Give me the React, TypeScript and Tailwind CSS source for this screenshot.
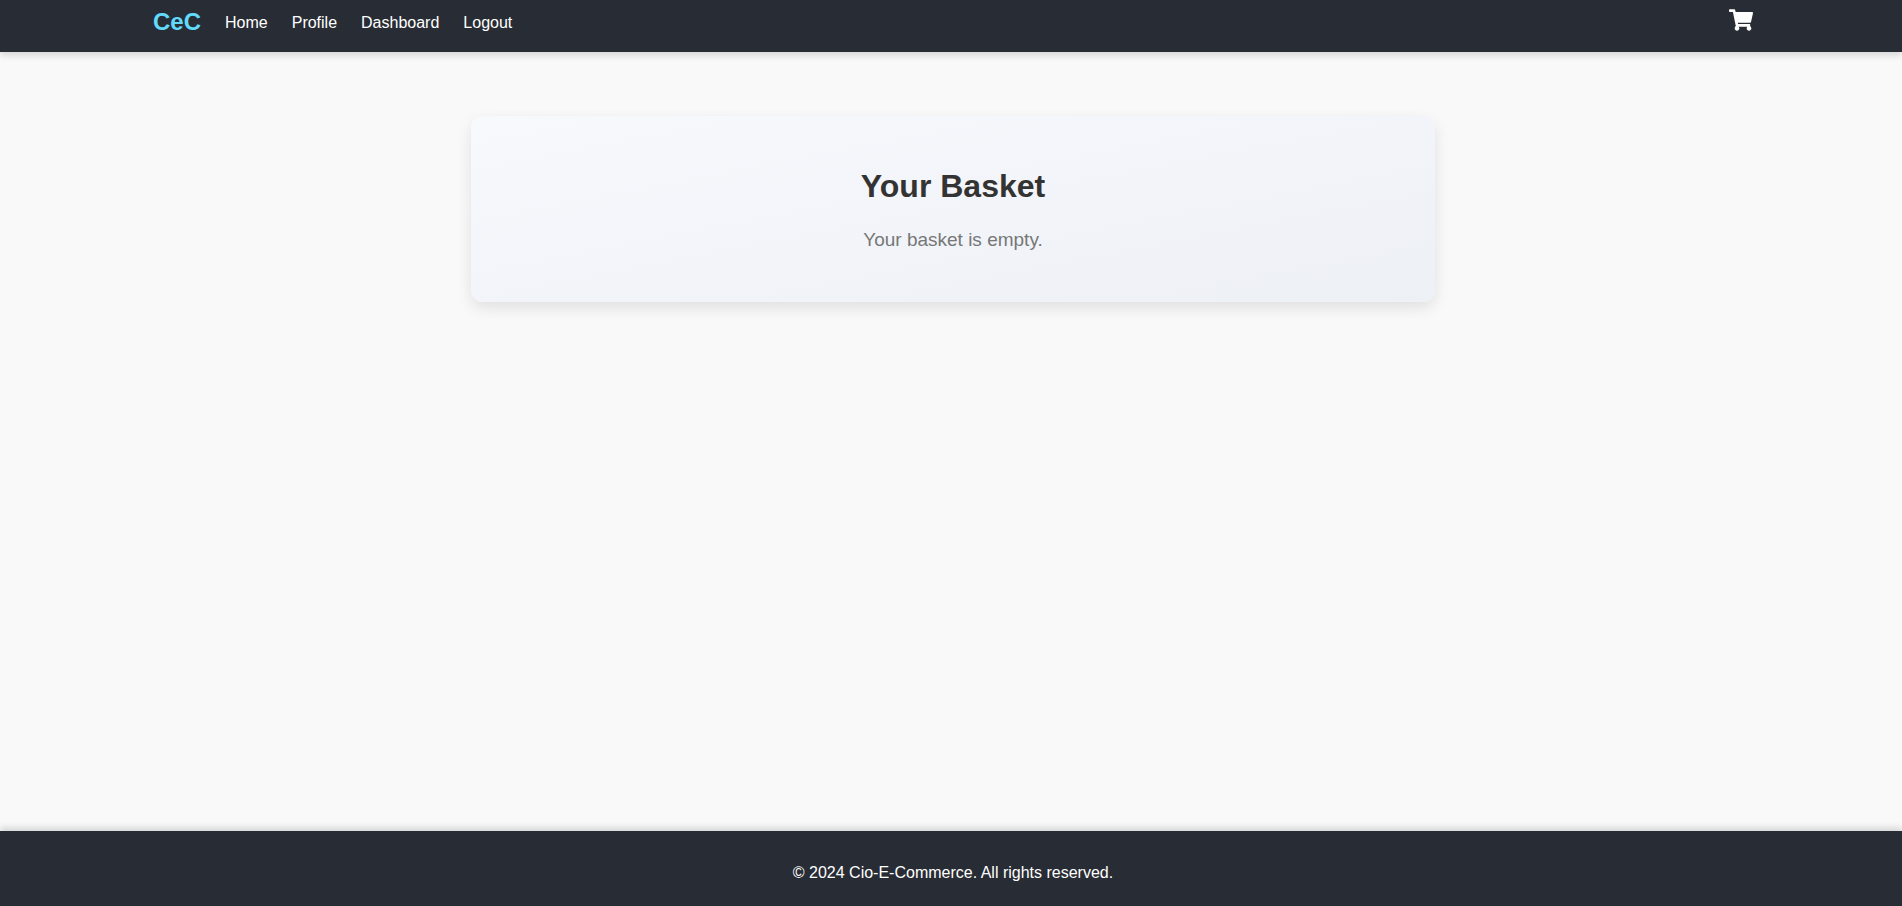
import { FaShoppingCart } from "react-icons/fa";

const links = ["Home", "Profile", "Dashboard", "Logout"];

export default function App() {
  return (
    <div className="flex min-h-screen flex-col bg-[#f9f9f9] font-['Liberation_Sans',Arial,sans-serif] text-base text-[#333]">
      <header className="bg-[#282c34] pl-1 shadow-[0_4px_6px_rgba(0,0,0,0.12)]">
        <nav className="mx-auto flex h-[52px] w-full max-w-[1600px] items-start justify-between text-white">
          <div className="flex items-start gap-6 pt-2">
            <a href="#" className="text-2xl leading-7 font-bold text-[#61dafb]">CeC</a>
            {links.map((label) => (
              <a key={label} href="#" className="leading-[30px]">{label}</a>
            ))}
          </div>
          <a href="#" aria-label="Basket" className="pt-2"><FaShoppingCart className="size-6" /></a>
        </nav>
      </header>
      <main className="flex-1 pt-16 pr-5 pl-6">
        <section className="mx-auto max-w-[964px] rounded-xl bg-[linear-gradient(to_bottom_right,#f7f9fd,#edf0f5)] p-12 text-center shadow-[0_6px_15px_rgba(0,0,0,0.1)]">
          <h1 className="mb-4 text-[32px] leading-[45px] font-bold">Your Basket</h1>
          <p className="text-[19px] leading-[29px] text-[#777]">Your basket is empty.</p>
        </section>
      </main>
      <footer className="bg-[#282c34] pt-8 pb-6 pl-1 text-center leading-[19px] text-white shadow-[0_-4px_6px_rgba(0,0,0,0.13)]">
        <p>© 2024 Cio-E-Commerce. All rights reserved.</p>
      </footer>
    </div>
  );
}
